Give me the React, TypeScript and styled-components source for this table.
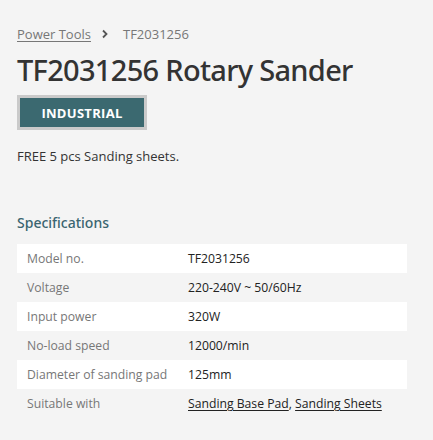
import styled, { createGlobalStyle } from "styled-components";

const GlobalStyle = createGlobalStyle`
  html, body {
    margin: 0;
    padding: 0;
    background: #f4f4f4;
  }
  body {
    font-family: "Open Sans", "Liberation Sans", sans-serif;
    color: #333;
  }
`;

const specs = [
  { label: "Model no.", value: "TF2031256" },
  { label: "Voltage", value: "220-240V ~ 50/60Hz" },
  { label: "Input power", value: "320W" },
  { label: "No-load speed", value: "12000/min" },
  { label: "Diameter of sanding pad", value: "125mm" },
];

export default function App() {
  return (
    <>
      <GlobalStyle />
      <Page>
        <Breadcrumb>
          <CrumbLink href="#">Power Tools</CrumbLink>
          <Chevron viewBox="0 0 8 10">
            <path d="M2 1.5 L5.5 5 L2 8.5" fill="none" stroke="#555" strokeWidth="1.8" />
          </Chevron>
          <span>TF2031256</span>
        </Breadcrumb>
        <Title>TF2031256 Rotary Sander</Title>
        <Badge>INDUSTRIAL</Badge>
        <Note>FREE 5 pcs Sanding sheets.</Note>
        <SectionHeading>Specifications</SectionHeading>
        <SpecTable>
          <tbody>
            {specs.map((s) => (
              <tr key={s.label}>
                <th>{s.label}</th>
                <td>{s.value}</td>
              </tr>
            ))}
            <tr>
              <th>Suitable with</th>
              <td>
                <a href="#">Sanding Base Pad</a>, <a href="#">Sanding Sheets</a>
              </td>
            </tr>
          </tbody>
        </SpecTable>
      </Page>
    </>
  );
}

const Page = styled.div`
  padding: 24px 26px 20px 17px;
`;

const Breadcrumb = styled.div`
  display: flex;
  align-items: center;
  font-size: 13px;
  color: #777;
  line-height: 20px;

  span {
    margin-left: 14px;
  }
`;

const CrumbLink = styled.a`
  color: #777;
  text-decoration: underline;
  text-underline-offset: 2px;
`;

const Chevron = styled.svg`
  width: 8px;
  height: 10px;
  margin-left: 10px;
`;

const Title = styled.h1`
  margin: 8px 0 0;
  font-family: "Noto Sans", "Open Sans", sans-serif;
  font-weight: 500;
  font-size: 29px;
  line-height: 36px;
  color: #333;
  letter-spacing: -0.7px;
`;

const Badge = styled.div`
  display: inline-flex;
  align-items: center;
  justify-content: center;
  margin-top: 7px;
  width: 124px;
  height: 29px;
  background: #3b6970;
  border: 3px solid #cacaca;
  color: #fff;
  font-weight: 700;
  font-size: 13px;
  letter-spacing: 0.3px;
`;

const Note = styled.p`
  margin: 17px 0 0;
  font-size: 13px;
  line-height: 18px;
  color: #333;
`;

const SectionHeading = styled.h2`
  margin: 48px 0 0;
  font-family: "Noto Sans", "Open Sans", sans-serif;
  font-weight: 500;
  font-size: 14px;
  line-height: 20px;
  color: #3a6570;
`;

const SpecTable = styled.table`
  margin-top: 11px;
  width: 390px;
  border-collapse: collapse;
  table-layout: fixed;
  font-size: 12.2px;

  tr:nth-child(odd) {
    background: #fff;
  }
  th,
  td {
    height: 29px;
    padding: 0 10px;
    text-align: left;
    vertical-align: middle;
    white-space: nowrap;
  }
  th {
    width: 141px;
    font-weight: 400;
    color: #777;
  }
  td {
    color: #222;
  }
  a {
    color: #222;
    text-decoration: underline;
    text-underline-offset: 2px;
  }
`;
